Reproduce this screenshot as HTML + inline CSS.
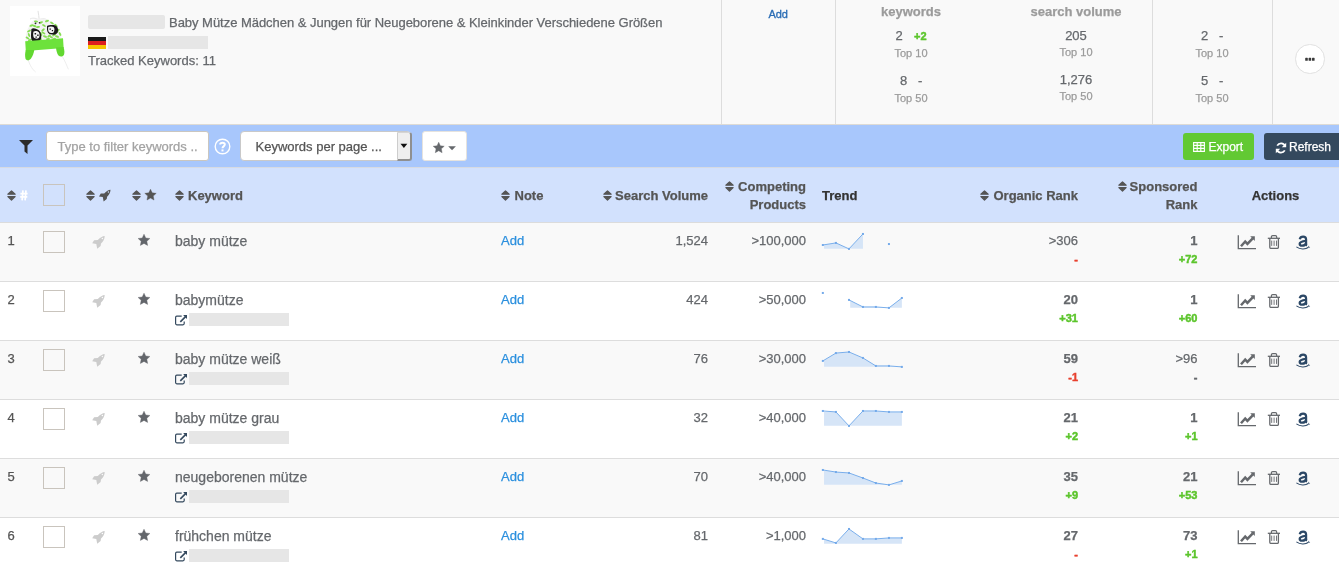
<!DOCTYPE html>
<html><head><meta charset="utf-8">
<style>
html,body{margin:0;padding:0;width:1339px;height:575px;overflow:hidden;background:#fff;}
body{position:relative;font-family:"Liberation Sans", sans-serif;}
.t{position:absolute;white-space:nowrap;-webkit-text-stroke:0.25px currentColor;}
.ch{-webkit-text-stroke:0.45px currentColor !important;}
#wrap{position:absolute;left:0;top:0;width:1339px;height:575px;will-change:transform;}
</style></head><body><div id="wrap">
<div style="position:absolute;left:0px;top:0px;width:1339px;height:124px;background:#f9f9f9"></div>
<div style="position:absolute;left:0px;top:124px;width:1339px;height:1px;background:#dedbd5"></div>
<div style="position:absolute;left:721px;top:0px;width:1px;height:124px;background:#dddddd"></div>
<div style="position:absolute;left:835px;top:0px;width:1px;height:124px;background:#dddddd"></div>
<div style="position:absolute;left:1152px;top:0px;width:1px;height:124px;background:#dddddd"></div>
<div style="position:absolute;left:1272px;top:0px;width:1px;height:124px;background:#dddddd"></div>
<svg style="position:absolute;left:10px;top:6px" width="70" height="70" viewBox="0 0 70 70">
<rect width="70" height="70" fill="#fff"/>
<path d="M28 4.9 C28.5 8 29 11 29.2 13.6" stroke="#e2e2e2" stroke-width="1" fill="none"/>
<path d="M20 13 C24 11 27 13 29 14 C32 12 35 12 37.5 14.5" stroke="#e6e6e6" stroke-width="1" fill="none"/>
<path d="M18.3 54 C20 60 23 64 25.6 66" stroke="#e8e8e8" stroke-width="0.8" fill="none"/>
<path d="M52.3 50.5 C55 55 57 60 58.4 63.3" stroke="#e8e8e8" stroke-width="0.8" fill="none"/>
<path d="M15.7 36.6 C15.5 30 16.5 25 18.3 22 C19.5 19 21 16.8 22.4 15.2 C25 13.5 27.5 12.6 29.7 12.6 C32 12.6 34.5 13 36.5 13.7 C40 15 43 16.8 45.4 18.9 C47.5 21.5 49 24.5 49.6 27.2 C50.5 29 51.2 30.5 51.6 31.9 Z" fill="#f3f3f3"/>
<ellipse cx="17.5" cy="32" rx="2.1" ry="1.0" transform="rotate(30 17.5 32)" fill="#86dd52"/><ellipse cx="19" cy="25" rx="2.1" ry="1.0" transform="rotate(-30 19 25)" fill="#86dd52"/><ellipse cx="21.5" cy="19.5" rx="2.1" ry="1.0" transform="rotate(-20 21.5 19.5)" fill="#86dd52"/><ellipse cx="26" cy="15.5" rx="2.1" ry="1.0" transform="rotate(10 26 15.5)" fill="#86dd52"/><ellipse cx="31" cy="16.5" rx="2.1" ry="1.0" transform="rotate(-25 31 16.5)" fill="#86dd52"/><ellipse cx="34" cy="19.5" rx="2.1" ry="1.0" transform="rotate(30 34 19.5)" fill="#86dd52"/><ellipse cx="33" cy="24" rx="2.1" ry="1.0" transform="rotate(-40 33 24)" fill="#86dd52"/><ellipse cx="35" cy="30.5" rx="2.1" ry="1.0" transform="rotate(20 35 30.5)" fill="#86dd52"/><ellipse cx="31" cy="28" rx="2.1" ry="1.0" transform="rotate(60 31 28)" fill="#86dd52"/><ellipse cx="38" cy="33" rx="2.1" ry="1.0" transform="rotate(-10 38 33)" fill="#86dd52"/><ellipse cx="41" cy="31" rx="2.1" ry="1.0" transform="rotate(30 41 31)" fill="#86dd52"/><ellipse cx="44" cy="29" rx="2.1" ry="1.0" transform="rotate(-30 44 29)" fill="#86dd52"/><ellipse cx="47" cy="30.5" rx="2.1" ry="1.0" transform="rotate(20 47 30.5)" fill="#86dd52"/><ellipse cx="48" cy="24.5" rx="2.1" ry="1.0" transform="rotate(-50 48 24.5)" fill="#86dd52"/><ellipse cx="42" cy="17" rx="2.1" ry="1.0" transform="rotate(30 42 17)" fill="#86dd52"/><ellipse cx="28" cy="21" rx="2.1" ry="1.0" transform="rotate(-10 28 21)" fill="#86dd52"/><ellipse cx="37" cy="15" rx="2.1" ry="1.0" transform="rotate(-20 37 15)" fill="#86dd52"/><ellipse cx="19" cy="29" rx="2.1" ry="1.0" transform="rotate(70 19 29)" fill="#86dd52"/><ellipse cx="23.5" cy="35" rx="2.1" ry="1.0" transform="rotate(0 23.5 35)" fill="#86dd52"/><ellipse cx="46" cy="19.5" rx="2.1" ry="1.0" transform="rotate(40 46 19.5)" fill="#86dd52"/><ellipse cx="30" cy="33.5" rx="2.1" ry="1.0" transform="rotate(-20 30 33.5)" fill="#86dd52"/>
<ellipse cx="20" cy="34" rx="2.1" ry="1.0" transform="rotate(-20 20 34)" fill="#86dd52"/><ellipse cx="27" cy="34.5" rx="2.1" ry="1.0" transform="rotate(10 27 34.5)" fill="#86dd52"/><ellipse cx="33" cy="35" rx="2.1" ry="1.0" transform="rotate(0 33 35)" fill="#86dd52"/><ellipse cx="44" cy="33" rx="2.1" ry="1.0" transform="rotate(-20 44 33)" fill="#86dd52"/><ellipse cx="50" cy="28" rx="2.1" ry="1.0" transform="rotate(60 50 28)" fill="#86dd52"/><ellipse cx="24.5" cy="20" rx="2.1" ry="1.0" transform="rotate(20 24.5 20)" fill="#86dd52"/><ellipse cx="39" cy="30" rx="2.1" ry="1.0" transform="rotate(-40 39 30)" fill="#86dd52"/><ellipse cx="46" cy="26" rx="2.1" ry="1.0" transform="rotate(10 46 26)" fill="#86dd52"/><ellipse cx="33.5" cy="27" rx="2.1" ry="1.0" transform="rotate(30 33.5 27)" fill="#86dd52"/>
<path d="M21.4 23 C22.5 22 24.5 22.2 25.8 22.8 L28.5 24 C30.5 25.5 31.5 28 31.3 31 C31 33.5 30 35.3 28 35.6 L23 35.4 C21.5 34.5 20.9 32 21 29 Z" fill="#1a1a1a"/>
<path d="M23.6 25.5 C25 24.6 27.5 24.8 28.8 26.2 C29.8 27.8 29.8 30 29 31.8 C27.8 33 25 33 23.8 31.6 C23 30 22.9 27.3 23.6 25.5 Z" fill="#f4f4f4"/>
<path d="M24.6 27 h1.5 v1.5 h-1.5 z M27.2 28.5 h1.4 v1.4 h-1.4 z M25.5 30.5 h1.3 v1.2 h-1.3 z" fill="#1a1a1a"/>
<path d="M37 20 C39 19 42.5 18.8 45.5 19.5 C47.5 20.5 48.3 22.5 48 25 C47.5 27.5 46 28.8 43.5 28.8 L39.5 28 C37.5 27 36.8 24.5 37 22 Z" fill="#1a1a1a"/>
<path d="M38.3 21 C39.8 20.3 42.5 20.3 43.8 21.2 C44.8 22.5 44.6 25 43.6 26.5 C42 27.3 39.8 27.2 38.8 26 C38 24.5 37.9 22.5 38.3 21 Z" fill="#f4f4f4"/>
<path d="M39.5 22.5 h1.4 v1.3 h-1.4 z M41.8 24 h1.3 v1.3 h-1.3 z" fill="#1a1a1a"/>
<circle cx="25.5" cy="17.3" r="0.9" fill="#2a2a2a"/><circle cx="29.5" cy="16.8" r="0.8" fill="#2a2a2a"/>
<path d="M15.2 35.3 L53 32.3 L53.6 42 L15.8 45 Z" fill="#6de23b"/>
<path d="M15.8 44 L24.3 44 C23.8 47 22.8 50 21 52.5 C19.5 54.5 17 55 15.6 53 C14.8 50 15 47 15.8 44 Z" fill="#62d830"/>
<path d="M46 41.5 L53.6 41 C54.5 44 54.6 47 54 48.8 C53 51 50 51 48.5 49.5 C47 47.5 46.3 45 46 41.5 Z" fill="#62d830"/>
</svg>
<div style="position:absolute;left:88px;top:15px;width:77px;height:14px;background:#e6e6e6;border-radius:2px"></div>
<div class="t " style="left:169px;top:16.00px;font-size:13px;line-height:13px;color:#65686c;font-weight:normal;letter-spacing:-0.03px;">Baby Mütze Mädchen &amp; Jungen für Neugeborene &amp; Kleinkinder Verschiedene Größen</div>
<div style="position:absolute;left:88px;top:37px;width:18px;height:4px;background:#1a1a1a"></div>
<div style="position:absolute;left:88px;top:41px;width:18px;height:4px;background:#dd1f1f"></div>
<div style="position:absolute;left:88px;top:45px;width:18px;height:4px;background:#f5c400"></div>
<div style="position:absolute;left:108px;top:36px;width:100px;height:13px;background:#e6e6e6"></div>
<div class="t " style="left:88px;top:53.50px;font-size:13px;line-height:13px;color:#65686c;font-weight:normal;">Tracked Keywords: 11</div>
<div class="t " style="left:478.20000000000005px;width:600px;text-align:center;top:8.89px;font-size:11px;line-height:11px;color:#2a6db5;font-weight:normal;-webkit-text-stroke:0.32px currentColor;">Add</div>
<div class="t " style="left:611px;width:600px;text-align:center;top:5.00px;font-size:13px;line-height:13px;color:#9b9b9b;font-weight:bold;">keywords</div>
<div class="t " style="left:776px;width:600px;text-align:center;top:5.00px;font-size:13px;line-height:13px;color:#9b9b9b;font-weight:bold;">search volume</div>
<div class="t " style="left:895.5px;top:29.00px;font-size:13px;line-height:13px;color:#65686c;font-weight:normal;">2</div>
<div class="t ch" style="left:914px;top:30.69px;font-size:11px;line-height:11px;color:#5cc52c;font-weight:bold;">+2</div>
<div class="t " style="left:611px;width:600px;text-align:center;top:47.69px;font-size:11px;line-height:11px;color:#9b9b9b;font-weight:normal;">Top 10</div>
<div class="t " style="left:900px;top:73.50px;font-size:13px;line-height:13px;color:#65686c;font-weight:normal;">8</div>
<div class="t " style="left:918px;top:73.50px;font-size:13px;line-height:13px;color:#65686c;font-weight:normal;">-</div>
<div class="t " style="left:611px;width:600px;text-align:center;top:92.69px;font-size:11px;line-height:11px;color:#9b9b9b;font-weight:normal;">Top 50</div>
<div class="t " style="left:776px;width:600px;text-align:center;top:29.00px;font-size:13px;line-height:13px;color:#65686c;font-weight:normal;">205</div>
<div class="t " style="left:776px;width:600px;text-align:center;top:46.69px;font-size:11px;line-height:11px;color:#9b9b9b;font-weight:normal;">Top 10</div>
<div class="t " style="left:776px;width:600px;text-align:center;top:72.50px;font-size:13px;line-height:13px;color:#65686c;font-weight:normal;">1,276</div>
<div class="t " style="left:776px;width:600px;text-align:center;top:90.69px;font-size:11px;line-height:11px;color:#9b9b9b;font-weight:normal;">Top 50</div>
<div class="t " style="left:1201px;top:29.00px;font-size:13px;line-height:13px;color:#65686c;font-weight:normal;">2</div>
<div class="t " style="left:1219px;top:29.00px;font-size:13px;line-height:13px;color:#65686c;font-weight:normal;">-</div>
<div class="t " style="left:912px;width:600px;text-align:center;top:47.69px;font-size:11px;line-height:11px;color:#9b9b9b;font-weight:normal;">Top 10</div>
<div class="t " style="left:1201px;top:74.00px;font-size:13px;line-height:13px;color:#65686c;font-weight:normal;">5</div>
<div class="t " style="left:1219px;top:74.00px;font-size:13px;line-height:13px;color:#65686c;font-weight:normal;">-</div>
<div class="t " style="left:912px;width:600px;text-align:center;top:92.69px;font-size:11px;line-height:11px;color:#9b9b9b;font-weight:normal;">Top 50</div>
<div style="position:absolute;left:1295.1px;top:44.2px;width:29.5px;height:29.5px;box-sizing:border-box;background:#fff;border:1px solid #e0e0e0;border-radius:50%"></div>
<svg style="position:absolute;left:1300px;top:50px" width="20" height="20"><rect x="5.2" y="7.8" width="2.6" height="3" rx="0.6" fill="#3a3a3a"/><rect x="8.6" y="7.8" width="2.6" height="3" rx="0.6" fill="#3a3a3a"/><rect x="12" y="7.8" width="2.6" height="3" rx="0.6" fill="#3a3a3a"/></svg>
<div style="position:absolute;left:0px;top:125px;width:1339px;height:42px;background:#a8c7fc"></div>
<div style="position:absolute;left:0px;top:167px;width:1339px;height:1px;background:#d6dae2"></div>
<svg style="position:absolute;left:19px;top:140px" width="14" height="14" viewBox="0 0 14 14"><path d="M0 0 H14 L8.5 5.5 V14 L5.5 11.5 V5.5 Z" fill="#2b2b2b"/></svg>
<div style="position:absolute;left:46px;top:131px;width:163px;height:30px;box-sizing:border-box;background:#fff;border:1px solid #cac6bf;border-radius:3px"></div>
<div class="t " style="left:57.5px;top:140.00px;font-size:13px;line-height:13px;color:#a3a3a3;font-weight:normal;">Type to filter keywords ..</div>
<svg style="position:absolute;left:214px;top:138px" width="17" height="17" viewBox="0 0 17 17"><circle cx="8.5" cy="8.5" r="7.3" stroke="#fff" stroke-width="1.4" fill="none"/><path d="M6.2 6.6 C6.2 4.2 10.8 4.2 10.8 6.6 C10.8 8.4 8.5 8.4 8.5 10.2" stroke="#fff" stroke-width="2" fill="none"/><rect x="7.5" y="11.4" width="2" height="2" fill="#fff"/></svg>
<div style="position:absolute;left:240px;top:131px;width:171px;height:30px;box-sizing:border-box;background:#fff;border:1px solid #c9c9c9;border-radius:4px"></div>
<div style="position:absolute;left:396.5px;top:132px;width:15px;height:29px;box-sizing:border-box;background:#efefef;border-left:1.5px solid #cdcdcd;border-top:1.5px solid #d5d5d5;border-bottom:2px solid #8f8f8f;border-right:2px solid #8f8f8f;border-radius:0 3px 3px 0"></div>
<svg style="position:absolute;left:399.7px;top:143px" width="9" height="6"><path d="M0.5 0.7 H7.3 L3.9 4.9 Z" fill="#111"/></svg>
<div class="t " style="left:255.5px;top:140.00px;font-size:13px;line-height:13px;color:#555555;font-weight:normal;">Keywords per page ...</div>
<div style="position:absolute;left:422px;top:131px;width:45px;height:30px;box-sizing:border-box;background:#fff;border:1px solid #e6e3de;border-radius:3px"></div>
<svg style="position:absolute;left:0;top:0;overflow:visible" width="1" height="1"><polygon points="438.70,142.20 440.34,145.75 444.22,146.21 441.35,148.86 442.11,152.69 438.70,150.78 435.29,152.69 436.05,148.86 433.18,146.21 437.06,145.75" fill="#65686c" stroke="#65686c" stroke-width="0.4" stroke-linejoin="round"/></svg>
<svg style="position:absolute;left:447.8px;top:145.6px" width="9" height="5"><path d="M0.2 0.3 H7.9 L4.05 4.3 Z" fill="#65686c"/></svg>
<div style="position:absolute;left:1183px;top:133px;width:71px;height:27px;background:#62c933;border-radius:3px"></div>
<svg style="position:absolute;left:1193px;top:142px" width="12" height="10" viewBox="0 0 12 10"><path d="M0.6 0.6 H11.4 V9.4 H0.6 Z M0.6 3.4 H11.4 M0.6 6.4 H11.4 M4.2 0.6 V9.4 M7.8 0.6 V9.4" stroke="#fff" stroke-width="1.1" fill="none"/></svg>
<div class="t " style="left:1208.5px;top:140.84px;font-size:12px;line-height:12px;color:#ffffff;font-weight:normal;">Export</div>
<div style="position:absolute;left:1264px;top:133px;width:80px;height:27px;background:#34495e;border-radius:3px"></div>
<svg style="position:absolute;left:1274.5px;top:142px" width="12" height="12" viewBox="0 0 12 12"><path d="M10.2 4.2 A4.5 4.5 0 0 0 2.2 3.6" stroke="#fff" stroke-width="1.8" fill="none"/><path d="M11.2 0.8 V5.2 H6.8 Z" fill="#fff"/><path d="M1.8 7.8 A4.5 4.5 0 0 0 9.8 8.4" stroke="#fff" stroke-width="1.8" fill="none"/><path d="M0.8 11.2 V6.8 H5.2 Z" fill="#fff"/></svg>
<div class="t " style="left:1289px;top:140.84px;font-size:12px;line-height:12px;color:#ffffff;font-weight:normal;">Refresh</div>
<div style="position:absolute;left:0px;top:168px;width:1339px;height:54px;background:#d2e1fd"></div>
<div style="position:absolute;left:0px;top:222px;width:1339px;height:1px;background:#dcdcdc"></div>
<svg style="position:absolute;left:7px;top:189.5px" width="9" height="11" viewBox="0 0 9 11"><path d="M4.5 0.9 L8.1 4.2 H0.9 Z" fill="#555" stroke="#555" stroke-width="1.3" stroke-linejoin="round"/><path d="M4.5 10.1 L8.1 6.6 H0.9 Z" fill="#555" stroke="#555" stroke-width="1.3" stroke-linejoin="round"/></svg>
<svg style="position:absolute;left:19.5px;top:189.8px" width="8" height="11" viewBox="0 0 8 11"><path d="M3 0.3 L2.1 10.3 M6 0.3 L5.1 10.3 M0.4 3.6 H7.6 M0.2 6.9 H7.3" stroke="#fff" stroke-width="1.7"/></svg>
<div style="position:absolute;left:43px;top:184px;width:22px;height:22px;box-sizing:border-box;border:1px solid #c9c4bd"></div>
<svg style="position:absolute;left:86px;top:189.5px" width="9" height="11" viewBox="0 0 9 11"><path d="M4.5 0.9 L8.1 4.2 H0.9 Z" fill="#555" stroke="#555" stroke-width="1.3" stroke-linejoin="round"/><path d="M4.5 10.1 L8.1 6.6 H0.9 Z" fill="#555" stroke="#555" stroke-width="1.3" stroke-linejoin="round"/></svg>
<svg style="position:absolute;left:97.0px;top:187.1px" width="16.560000000000002" height="16.560000000000002" viewBox="0 0 18 18"><path d="M14.7 3.0 C12.5 3.2 10.3 4.5 7.8 7.0 L4.1 7.2 L2.2 10.3 L6.3 11.0 L7.2 15.7 L10.6 13.1 L11.0 10.6 C13.2 8.5 14.6 6.0 14.7 3.0 Z" fill="#555"/><circle cx="12.4" cy="5.5" r="0.8" fill="#d2e1fd"/></svg>
<svg style="position:absolute;left:131.5px;top:189.5px" width="9" height="11" viewBox="0 0 9 11"><path d="M4.5 0.9 L8.1 4.2 H0.9 Z" fill="#555" stroke="#555" stroke-width="1.3" stroke-linejoin="round"/><path d="M4.5 10.1 L8.1 6.6 H0.9 Z" fill="#555" stroke="#555" stroke-width="1.3" stroke-linejoin="round"/></svg>
<svg style="position:absolute;left:0;top:0;overflow:visible" width="1" height="1"><polygon points="150.50,189.20 152.19,192.87 156.21,193.35 153.24,196.09 154.03,200.05 150.50,198.08 146.97,200.05 147.76,196.09 144.79,193.35 148.81,192.87" fill="#555" stroke="#555" stroke-width="0.4" stroke-linejoin="round"/></svg>
<svg style="position:absolute;left:175px;top:189.5px" width="9" height="11" viewBox="0 0 9 11"><path d="M4.5 0.9 L8.1 4.2 H0.9 Z" fill="#555" stroke="#555" stroke-width="1.3" stroke-linejoin="round"/><path d="M4.5 10.1 L8.1 6.6 H0.9 Z" fill="#555" stroke="#555" stroke-width="1.3" stroke-linejoin="round"/></svg>
<div class="t " style="left:188px;top:189.00px;font-size:13px;line-height:13px;color:#555555;font-weight:bold;">Keyword</div>
<svg style="position:absolute;left:501px;top:189.5px" width="9" height="11" viewBox="0 0 9 11"><path d="M4.5 0.9 L8.1 4.2 H0.9 Z" fill="#555" stroke="#555" stroke-width="1.3" stroke-linejoin="round"/><path d="M4.5 10.1 L8.1 6.6 H0.9 Z" fill="#555" stroke="#555" stroke-width="1.3" stroke-linejoin="round"/></svg>
<div class="t " style="left:514.5px;top:189.00px;font-size:13px;line-height:13px;color:#555555;font-weight:bold;">Note</div>
<svg style="position:absolute;left:603px;top:189.5px" width="9" height="11" viewBox="0 0 9 11"><path d="M4.5 0.9 L8.1 4.2 H0.9 Z" fill="#555" stroke="#555" stroke-width="1.3" stroke-linejoin="round"/><path d="M4.5 10.1 L8.1 6.6 H0.9 Z" fill="#555" stroke="#555" stroke-width="1.3" stroke-linejoin="round"/></svg>
<div class="t " style="right:631px;top:189.00px;font-size:13px;line-height:13px;color:#555555;font-weight:bold;">Search Volume</div>
<svg style="position:absolute;left:725px;top:181.0px" width="9" height="11" viewBox="0 0 9 11"><path d="M4.5 0.9 L8.1 4.2 H0.9 Z" fill="#555" stroke="#555" stroke-width="1.3" stroke-linejoin="round"/><path d="M4.5 10.1 L8.1 6.6 H0.9 Z" fill="#555" stroke="#555" stroke-width="1.3" stroke-linejoin="round"/></svg>
<div class="t " style="right:533px;top:180.00px;font-size:13px;line-height:13px;color:#555555;font-weight:bold;">Competing</div>
<div class="t " style="right:533px;top:197.50px;font-size:13px;line-height:13px;color:#555555;font-weight:bold;">Products</div>
<div class="t " style="left:822px;top:189.00px;font-size:13px;line-height:13px;color:#333333;font-weight:bold;">Trend</div>
<svg style="position:absolute;left:980px;top:189.5px" width="9" height="11" viewBox="0 0 9 11"><path d="M4.5 0.9 L8.1 4.2 H0.9 Z" fill="#555" stroke="#555" stroke-width="1.3" stroke-linejoin="round"/><path d="M4.5 10.1 L8.1 6.6 H0.9 Z" fill="#555" stroke="#555" stroke-width="1.3" stroke-linejoin="round"/></svg>
<div class="t " style="right:261px;top:189.00px;font-size:13px;line-height:13px;color:#555555;font-weight:bold;">Organic Rank</div>
<svg style="position:absolute;left:1117.5px;top:181.0px" width="9" height="11" viewBox="0 0 9 11"><path d="M4.5 0.9 L8.1 4.2 H0.9 Z" fill="#555" stroke="#555" stroke-width="1.3" stroke-linejoin="round"/><path d="M4.5 10.1 L8.1 6.6 H0.9 Z" fill="#555" stroke="#555" stroke-width="1.3" stroke-linejoin="round"/></svg>
<div class="t " style="right:141.5px;top:180.00px;font-size:13px;line-height:13px;color:#555555;font-weight:bold;">Sponsored</div>
<div class="t " style="right:141.5px;top:197.50px;font-size:13px;line-height:13px;color:#555555;font-weight:bold;">Rank</div>
<div class="t " style="left:975.5px;width:600px;text-align:center;top:189.00px;font-size:13px;line-height:13px;color:#333333;font-weight:bold;">Actions</div>
<div style="position:absolute;left:0px;top:223px;width:1339px;height:58px;background:#f9f9f9"></div>
<div style="position:absolute;left:0px;top:281px;width:1339px;height:1px;background:#dddddd"></div>
<div class="t " style="left:7.5px;top:234.00px;font-size:13px;line-height:13px;color:#555555;font-weight:normal;">1</div>
<div style="position:absolute;left:43px;top:231px;width:22px;height:22px;box-sizing:border-box;border:1px solid #c9c4bd"></div>
<svg style="position:absolute;left:90px;top:233px" width="18.0" height="18.0" viewBox="0 0 18 18"><path d="M14.7 3.0 C12.5 3.2 10.3 4.5 7.8 7.0 L4.1 7.2 L2.2 10.3 L6.3 11.0 L7.2 15.7 L10.6 13.1 L11.0 10.6 C13.2 8.5 14.6 6.0 14.7 3.0 Z" fill="#cccccc"/><circle cx="12.4" cy="5.5" r="0.8" fill="#f9f9f9"/></svg>
<svg style="position:absolute;left:0;top:0;overflow:visible" width="1" height="1"><polygon points="144.00,234.20 145.75,237.99 149.90,238.48 146.83,241.32 147.64,245.42 144.00,243.38 140.36,245.42 141.17,241.32 138.10,238.48 142.25,237.99" fill="#63666b" stroke="#63666b" stroke-width="0.4" stroke-linejoin="round"/></svg>
<div class="t " style="left:175px;top:233.95px;font-size:14px;line-height:14px;color:#65686c;font-weight:normal;">baby mütze</div>
<div class="t " style="left:501px;top:233.60px;font-size:13px;line-height:13px;color:#2c90de;font-weight:normal;">Add</div>
<div class="t " style="right:631px;top:234.00px;font-size:13px;line-height:13px;color:#65686c;font-weight:normal;">1,524</div>
<div class="t " style="right:533px;top:234.00px;font-size:13px;line-height:13px;color:#65686c;font-weight:normal;">&gt;100,000</div>
<svg style="position:absolute;left:0;top:0;overflow:visible" width="1" height="1"><path d="M822.84 245.01 L835.91 242.92 L848.98 248.90 L862.95 233.96 L862.95 248.75 L824.04 248.75 L824.04 245.01 Z" fill="#d6e5f7"/><path d="M822.84 245.01 L835.91 242.92 L848.98 248.90 L862.95 233.96" stroke="#79aeeb" stroke-width="1" fill="none"/><rect x="821.84" y="244.01" width="2" height="2" fill="#74aaea"/><rect x="834.91" y="241.92" width="2" height="2" fill="#74aaea"/><rect x="847.98" y="247.90" width="2" height="2" fill="#74aaea"/><rect x="861.95" y="232.96" width="2" height="2" fill="#74aaea"/><rect x="887.94" y="243.04" width="2" height="2" fill="#74aaea"/></svg>
<div class="t " style="right:261px;top:234.00px;font-size:13px;line-height:13px;color:#65686c;font-weight:normal;">&gt;306</div>
<div class="t ch" style="right:261px;top:253.69px;font-size:11px;line-height:11px;color:#e8412f;font-weight:bold;">-</div>
<div class="t " style="right:141.5px;top:234.00px;font-size:13px;line-height:13px;color:#65686c;font-weight:bold;">1</div>
<div class="t ch" style="right:141.5px;top:253.69px;font-size:11px;line-height:11px;color:#5cc52c;font-weight:bold;">+72</div>
<svg style="position:absolute;left:1237px;top:235px" width="20" height="15" viewBox="0 0 20 15"><path d="M1.3 0.3 V13.6 H19" stroke="#65686c" stroke-width="1.3" fill="none"/><path d="M4 11.3 L8.2 6.5 L10.4 8.9 L15.8 3.4" stroke="#65686c" stroke-width="2.5" fill="none"/><path d="M13.2 1.3 H17.8 V5.9 Z" fill="#65686c"/></svg>
<svg style="position:absolute;left:1267px;top:235px" width="14" height="14" viewBox="0 0 14 14"><path d="M0.8 3.3 H13" stroke="#65686c" stroke-width="1.3"/><path d="M4.4 3.3 V1.9 C4.4 1.1 4.9 0.7 5.7 0.7 H8.4 C9.2 0.7 9.7 1.1 9.7 1.9 V3.3" stroke="#65686c" stroke-width="1.2" fill="none"/><path d="M2.8 3.3 V12.2 C2.8 13 3.3 13.4 4.1 13.4 H10.1 C10.9 13.4 11.4 13 11.4 12.2 V3.3" stroke="#65686c" stroke-width="1.3" fill="none"/><path d="M4.7 5.6 V10.9 M7.1 5.6 V10.9 M9.5 5.6 V10.9" stroke="#65686c" stroke-width="0.9"/></svg>
<svg style="position:absolute;left:1290px;top:230px" width="25" height="25" viewBox="0 0 25 25"><path d="M9.7 9.2 C10.2 7.1 11.8 6.6 13.1 6.6 C15.1 6.6 16.1 7.6 16.1 9.6 V13.9 C16.1 14.8 16.5 15.2 17.1 15.4" stroke="#2c4866" stroke-width="2.2" fill="none"/><path d="M16.1 10.8 C12.6 11.2 9.7 11.6 9.7 13.7 C9.7 15.1 10.7 15.7 12.1 15.7 C13.9 15.7 15.5 14.7 16.1 13.2" stroke="#2c4866" stroke-width="2.3" fill="none"/><path d="M6.4 16.9 C10 19.6 15.5 19.6 18.6 17.3" stroke="#2c4866" stroke-width="1.1" fill="none"/><path d="M18.0 16.4 C18.9 16.3 19.7 16.9 19.4 17.9" stroke="#2c4866" stroke-width="0.7" fill="none"/></svg>
<div style="position:absolute;left:0px;top:282px;width:1339px;height:58px;background:#ffffff"></div>
<div style="position:absolute;left:0px;top:340px;width:1339px;height:1px;background:#dddddd"></div>
<div class="t " style="left:7.5px;top:293.00px;font-size:13px;line-height:13px;color:#555555;font-weight:normal;">2</div>
<div style="position:absolute;left:43px;top:290px;width:22px;height:22px;box-sizing:border-box;border:1px solid #c9c4bd"></div>
<svg style="position:absolute;left:90px;top:292px" width="18.0" height="18.0" viewBox="0 0 18 18"><path d="M14.7 3.0 C12.5 3.2 10.3 4.5 7.8 7.0 L4.1 7.2 L2.2 10.3 L6.3 11.0 L7.2 15.7 L10.6 13.1 L11.0 10.6 C13.2 8.5 14.6 6.0 14.7 3.0 Z" fill="#cccccc"/><circle cx="12.4" cy="5.5" r="0.8" fill="#ffffff"/></svg>
<svg style="position:absolute;left:0;top:0;overflow:visible" width="1" height="1"><polygon points="144.00,293.20 145.75,296.99 149.90,297.48 146.83,300.32 147.64,304.42 144.00,302.38 140.36,304.42 141.17,300.32 138.10,297.48 142.25,296.99" fill="#63666b" stroke="#63666b" stroke-width="0.4" stroke-linejoin="round"/></svg>
<div class="t " style="left:175px;top:292.95px;font-size:14px;line-height:14px;color:#65686c;font-weight:normal;">babymütze</div>
<svg style="position:absolute;left:175px;top:313.5px" width="13" height="13" viewBox="0 0 13 13"><path d="M6.7 2.2 H1.8 C1.1 2.2 0.6 2.7 0.6 3.4 V9.6 C0.6 10.3 1.1 10.8 1.8 10.8 H8 C8.7 10.8 9.2 10.3 9.2 9.6 V7.6" stroke="#34495e" stroke-width="1.2" fill="none"/><path d="M5.3 7.9 L10.6 2.6" stroke="#34495e" stroke-width="1.6"/><path d="M8.1 1.0 H12 V4.9 Z" fill="#34495e"/></svg>
<div style="position:absolute;left:189px;top:313px;width:100px;height:13px;background:#e6e6e6"></div>
<div class="t " style="left:501px;top:292.60px;font-size:13px;line-height:13px;color:#2c90de;font-weight:normal;">Add</div>
<div class="t " style="right:631px;top:293.00px;font-size:13px;line-height:13px;color:#65686c;font-weight:normal;">424</div>
<div class="t " style="right:533px;top:293.00px;font-size:13px;line-height:13px;color:#65686c;font-weight:normal;">&gt;50,000</div>
<svg style="position:absolute;left:0;top:0;overflow:visible" width="1" height="1"><rect x="821.84" y="291.96" width="2" height="2" fill="#74aaea"/><path d="M848.98 299.91 L862.95 306.93 L875.87 306.93 L888.94 307.90 L901.86 297.97 L901.86 307.75 L850.18 307.75 L850.18 299.91 Z" fill="#d6e5f7"/><path d="M848.98 299.91 L862.95 306.93 L875.87 306.93 L888.94 307.90 L901.86 297.97" stroke="#79aeeb" stroke-width="1" fill="none"/><rect x="847.98" y="298.91" width="2" height="2" fill="#74aaea"/><rect x="861.95" y="305.93" width="2" height="2" fill="#74aaea"/><rect x="874.87" y="305.93" width="2" height="2" fill="#74aaea"/><rect x="887.94" y="306.90" width="2" height="2" fill="#74aaea"/><rect x="900.86" y="296.97" width="2" height="2" fill="#74aaea"/></svg>
<div class="t " style="right:261px;top:293.00px;font-size:13px;line-height:13px;color:#65686c;font-weight:bold;">20</div>
<div class="t ch" style="right:261px;top:312.69px;font-size:11px;line-height:11px;color:#5cc52c;font-weight:bold;">+31</div>
<div class="t " style="right:141.5px;top:293.00px;font-size:13px;line-height:13px;color:#65686c;font-weight:bold;">1</div>
<div class="t ch" style="right:141.5px;top:312.69px;font-size:11px;line-height:11px;color:#5cc52c;font-weight:bold;">+60</div>
<svg style="position:absolute;left:1237px;top:294px" width="20" height="15" viewBox="0 0 20 15"><path d="M1.3 0.3 V13.6 H19" stroke="#65686c" stroke-width="1.3" fill="none"/><path d="M4 11.3 L8.2 6.5 L10.4 8.9 L15.8 3.4" stroke="#65686c" stroke-width="2.5" fill="none"/><path d="M13.2 1.3 H17.8 V5.9 Z" fill="#65686c"/></svg>
<svg style="position:absolute;left:1267px;top:294px" width="14" height="14" viewBox="0 0 14 14"><path d="M0.8 3.3 H13" stroke="#65686c" stroke-width="1.3"/><path d="M4.4 3.3 V1.9 C4.4 1.1 4.9 0.7 5.7 0.7 H8.4 C9.2 0.7 9.7 1.1 9.7 1.9 V3.3" stroke="#65686c" stroke-width="1.2" fill="none"/><path d="M2.8 3.3 V12.2 C2.8 13 3.3 13.4 4.1 13.4 H10.1 C10.9 13.4 11.4 13 11.4 12.2 V3.3" stroke="#65686c" stroke-width="1.3" fill="none"/><path d="M4.7 5.6 V10.9 M7.1 5.6 V10.9 M9.5 5.6 V10.9" stroke="#65686c" stroke-width="0.9"/></svg>
<svg style="position:absolute;left:1290px;top:289px" width="25" height="25" viewBox="0 0 25 25"><path d="M9.7 9.2 C10.2 7.1 11.8 6.6 13.1 6.6 C15.1 6.6 16.1 7.6 16.1 9.6 V13.9 C16.1 14.8 16.5 15.2 17.1 15.4" stroke="#2c4866" stroke-width="2.2" fill="none"/><path d="M16.1 10.8 C12.6 11.2 9.7 11.6 9.7 13.7 C9.7 15.1 10.7 15.7 12.1 15.7 C13.9 15.7 15.5 14.7 16.1 13.2" stroke="#2c4866" stroke-width="2.3" fill="none"/><path d="M6.4 16.9 C10 19.6 15.5 19.6 18.6 17.3" stroke="#2c4866" stroke-width="1.1" fill="none"/><path d="M18.0 16.4 C18.9 16.3 19.7 16.9 19.4 17.9" stroke="#2c4866" stroke-width="0.7" fill="none"/></svg>
<div style="position:absolute;left:0px;top:341px;width:1339px;height:58px;background:#f9f9f9"></div>
<div style="position:absolute;left:0px;top:399px;width:1339px;height:1px;background:#dddddd"></div>
<div class="t " style="left:7.5px;top:352.00px;font-size:13px;line-height:13px;color:#555555;font-weight:normal;">3</div>
<div style="position:absolute;left:43px;top:349px;width:22px;height:22px;box-sizing:border-box;border:1px solid #c9c4bd"></div>
<svg style="position:absolute;left:90px;top:351px" width="18.0" height="18.0" viewBox="0 0 18 18"><path d="M14.7 3.0 C12.5 3.2 10.3 4.5 7.8 7.0 L4.1 7.2 L2.2 10.3 L6.3 11.0 L7.2 15.7 L10.6 13.1 L11.0 10.6 C13.2 8.5 14.6 6.0 14.7 3.0 Z" fill="#cccccc"/><circle cx="12.4" cy="5.5" r="0.8" fill="#f9f9f9"/></svg>
<svg style="position:absolute;left:0;top:0;overflow:visible" width="1" height="1"><polygon points="144.00,352.20 145.75,355.99 149.90,356.48 146.83,359.32 147.64,363.42 144.00,361.38 140.36,363.42 141.17,359.32 138.10,356.48 142.25,355.99" fill="#63666b" stroke="#63666b" stroke-width="0.4" stroke-linejoin="round"/></svg>
<div class="t " style="left:175px;top:351.95px;font-size:14px;line-height:14px;color:#65686c;font-weight:normal;">baby mütze weiß</div>
<svg style="position:absolute;left:175px;top:372.5px" width="13" height="13" viewBox="0 0 13 13"><path d="M6.7 2.2 H1.8 C1.1 2.2 0.6 2.7 0.6 3.4 V9.6 C0.6 10.3 1.1 10.8 1.8 10.8 H8 C8.7 10.8 9.2 10.3 9.2 9.6 V7.6" stroke="#34495e" stroke-width="1.2" fill="none"/><path d="M5.3 7.9 L10.6 2.6" stroke="#34495e" stroke-width="1.6"/><path d="M8.1 1.0 H12 V4.9 Z" fill="#34495e"/></svg>
<div style="position:absolute;left:189px;top:372px;width:100px;height:13px;background:#e6e6e6"></div>
<div class="t " style="left:501px;top:351.60px;font-size:13px;line-height:13px;color:#2c90de;font-weight:normal;">Add</div>
<div class="t " style="right:631px;top:352.00px;font-size:13px;line-height:13px;color:#65686c;font-weight:normal;">76</div>
<div class="t " style="right:533px;top:352.00px;font-size:13px;line-height:13px;color:#65686c;font-weight:normal;">&gt;30,000</div>
<svg style="position:absolute;left:0;top:0;overflow:visible" width="1" height="1"><path d="M822.84 360.92 L835.91 353.08 L848.98 351.96 L862.95 357.94 L875.87 365.93 L888.94 365.93 L901.86 366.90 L901.86 366.75 L824.04 366.75 L824.04 360.92 Z" fill="#d6e5f7"/><path d="M822.84 360.92 L835.91 353.08 L848.98 351.96 L862.95 357.94 L875.87 365.93 L888.94 365.93 L901.86 366.90" stroke="#79aeeb" stroke-width="1" fill="none"/><rect x="821.84" y="359.92" width="2" height="2" fill="#74aaea"/><rect x="834.91" y="352.08" width="2" height="2" fill="#74aaea"/><rect x="847.98" y="350.96" width="2" height="2" fill="#74aaea"/><rect x="861.95" y="356.94" width="2" height="2" fill="#74aaea"/><rect x="874.87" y="364.93" width="2" height="2" fill="#74aaea"/><rect x="887.94" y="364.93" width="2" height="2" fill="#74aaea"/><rect x="900.86" y="365.90" width="2" height="2" fill="#74aaea"/></svg>
<div class="t " style="right:261px;top:352.00px;font-size:13px;line-height:13px;color:#65686c;font-weight:bold;">59</div>
<div class="t ch" style="right:261px;top:371.69px;font-size:11px;line-height:11px;color:#e8412f;font-weight:bold;">-1</div>
<div class="t " style="right:141.5px;top:352.00px;font-size:13px;line-height:13px;color:#65686c;font-weight:normal;">&gt;96</div>
<div class="t ch" style="right:141.5px;top:371.69px;font-size:11px;line-height:11px;color:#65686c;font-weight:bold;">-</div>
<svg style="position:absolute;left:1237px;top:353px" width="20" height="15" viewBox="0 0 20 15"><path d="M1.3 0.3 V13.6 H19" stroke="#65686c" stroke-width="1.3" fill="none"/><path d="M4 11.3 L8.2 6.5 L10.4 8.9 L15.8 3.4" stroke="#65686c" stroke-width="2.5" fill="none"/><path d="M13.2 1.3 H17.8 V5.9 Z" fill="#65686c"/></svg>
<svg style="position:absolute;left:1267px;top:353px" width="14" height="14" viewBox="0 0 14 14"><path d="M0.8 3.3 H13" stroke="#65686c" stroke-width="1.3"/><path d="M4.4 3.3 V1.9 C4.4 1.1 4.9 0.7 5.7 0.7 H8.4 C9.2 0.7 9.7 1.1 9.7 1.9 V3.3" stroke="#65686c" stroke-width="1.2" fill="none"/><path d="M2.8 3.3 V12.2 C2.8 13 3.3 13.4 4.1 13.4 H10.1 C10.9 13.4 11.4 13 11.4 12.2 V3.3" stroke="#65686c" stroke-width="1.3" fill="none"/><path d="M4.7 5.6 V10.9 M7.1 5.6 V10.9 M9.5 5.6 V10.9" stroke="#65686c" stroke-width="0.9"/></svg>
<svg style="position:absolute;left:1290px;top:348px" width="25" height="25" viewBox="0 0 25 25"><path d="M9.7 9.2 C10.2 7.1 11.8 6.6 13.1 6.6 C15.1 6.6 16.1 7.6 16.1 9.6 V13.9 C16.1 14.8 16.5 15.2 17.1 15.4" stroke="#2c4866" stroke-width="2.2" fill="none"/><path d="M16.1 10.8 C12.6 11.2 9.7 11.6 9.7 13.7 C9.7 15.1 10.7 15.7 12.1 15.7 C13.9 15.7 15.5 14.7 16.1 13.2" stroke="#2c4866" stroke-width="2.3" fill="none"/><path d="M6.4 16.9 C10 19.6 15.5 19.6 18.6 17.3" stroke="#2c4866" stroke-width="1.1" fill="none"/><path d="M18.0 16.4 C18.9 16.3 19.7 16.9 19.4 17.9" stroke="#2c4866" stroke-width="0.7" fill="none"/></svg>
<div style="position:absolute;left:0px;top:400px;width:1339px;height:58px;background:#ffffff"></div>
<div style="position:absolute;left:0px;top:458px;width:1339px;height:1px;background:#dddddd"></div>
<div class="t " style="left:7.5px;top:411.00px;font-size:13px;line-height:13px;color:#555555;font-weight:normal;">4</div>
<div style="position:absolute;left:43px;top:408px;width:22px;height:22px;box-sizing:border-box;border:1px solid #c9c4bd"></div>
<svg style="position:absolute;left:90px;top:410px" width="18.0" height="18.0" viewBox="0 0 18 18"><path d="M14.7 3.0 C12.5 3.2 10.3 4.5 7.8 7.0 L4.1 7.2 L2.2 10.3 L6.3 11.0 L7.2 15.7 L10.6 13.1 L11.0 10.6 C13.2 8.5 14.6 6.0 14.7 3.0 Z" fill="#cccccc"/><circle cx="12.4" cy="5.5" r="0.8" fill="#ffffff"/></svg>
<svg style="position:absolute;left:0;top:0;overflow:visible" width="1" height="1"><polygon points="144.00,411.20 145.75,414.99 149.90,415.48 146.83,418.32 147.64,422.42 144.00,420.38 140.36,422.42 141.17,418.32 138.10,415.48 142.25,414.99" fill="#63666b" stroke="#63666b" stroke-width="0.4" stroke-linejoin="round"/></svg>
<div class="t " style="left:175px;top:410.95px;font-size:14px;line-height:14px;color:#65686c;font-weight:normal;">baby mütze grau</div>
<svg style="position:absolute;left:175px;top:431.5px" width="13" height="13" viewBox="0 0 13 13"><path d="M6.7 2.2 H1.8 C1.1 2.2 0.6 2.7 0.6 3.4 V9.6 C0.6 10.3 1.1 10.8 1.8 10.8 H8 C8.7 10.8 9.2 10.3 9.2 9.6 V7.6" stroke="#34495e" stroke-width="1.2" fill="none"/><path d="M5.3 7.9 L10.6 2.6" stroke="#34495e" stroke-width="1.6"/><path d="M8.1 1.0 H12 V4.9 Z" fill="#34495e"/></svg>
<div style="position:absolute;left:189px;top:431px;width:100px;height:13px;background:#e6e6e6"></div>
<div class="t " style="left:501px;top:410.60px;font-size:13px;line-height:13px;color:#2c90de;font-weight:normal;">Add</div>
<div class="t " style="right:631px;top:411.00px;font-size:13px;line-height:13px;color:#65686c;font-weight:normal;">32</div>
<div class="t " style="right:533px;top:411.00px;font-size:13px;line-height:13px;color:#65686c;font-weight:normal;">&gt;40,000</div>
<svg style="position:absolute;left:0;top:0;overflow:visible" width="1" height="1"><path d="M822.84 410.96 L835.91 411.93 L848.98 425.90 L862.95 410.96 L875.87 410.96 L888.94 411.93 L901.86 411.93 L901.86 425.75 L824.04 425.75 L824.04 410.96 Z" fill="#d6e5f7"/><path d="M822.84 410.96 L835.91 411.93 L848.98 425.90 L862.95 410.96 L875.87 410.96 L888.94 411.93 L901.86 411.93" stroke="#79aeeb" stroke-width="1" fill="none"/><rect x="821.84" y="409.96" width="2" height="2" fill="#74aaea"/><rect x="834.91" y="410.93" width="2" height="2" fill="#74aaea"/><rect x="847.98" y="424.90" width="2" height="2" fill="#74aaea"/><rect x="861.95" y="409.96" width="2" height="2" fill="#74aaea"/><rect x="874.87" y="409.96" width="2" height="2" fill="#74aaea"/><rect x="887.94" y="410.93" width="2" height="2" fill="#74aaea"/><rect x="900.86" y="410.93" width="2" height="2" fill="#74aaea"/></svg>
<div class="t " style="right:261px;top:411.00px;font-size:13px;line-height:13px;color:#65686c;font-weight:bold;">21</div>
<div class="t ch" style="right:261px;top:430.69px;font-size:11px;line-height:11px;color:#5cc52c;font-weight:bold;">+2</div>
<div class="t " style="right:141.5px;top:411.00px;font-size:13px;line-height:13px;color:#65686c;font-weight:bold;">1</div>
<div class="t ch" style="right:141.5px;top:430.69px;font-size:11px;line-height:11px;color:#5cc52c;font-weight:bold;">+1</div>
<svg style="position:absolute;left:1237px;top:412px" width="20" height="15" viewBox="0 0 20 15"><path d="M1.3 0.3 V13.6 H19" stroke="#65686c" stroke-width="1.3" fill="none"/><path d="M4 11.3 L8.2 6.5 L10.4 8.9 L15.8 3.4" stroke="#65686c" stroke-width="2.5" fill="none"/><path d="M13.2 1.3 H17.8 V5.9 Z" fill="#65686c"/></svg>
<svg style="position:absolute;left:1267px;top:412px" width="14" height="14" viewBox="0 0 14 14"><path d="M0.8 3.3 H13" stroke="#65686c" stroke-width="1.3"/><path d="M4.4 3.3 V1.9 C4.4 1.1 4.9 0.7 5.7 0.7 H8.4 C9.2 0.7 9.7 1.1 9.7 1.9 V3.3" stroke="#65686c" stroke-width="1.2" fill="none"/><path d="M2.8 3.3 V12.2 C2.8 13 3.3 13.4 4.1 13.4 H10.1 C10.9 13.4 11.4 13 11.4 12.2 V3.3" stroke="#65686c" stroke-width="1.3" fill="none"/><path d="M4.7 5.6 V10.9 M7.1 5.6 V10.9 M9.5 5.6 V10.9" stroke="#65686c" stroke-width="0.9"/></svg>
<svg style="position:absolute;left:1290px;top:407px" width="25" height="25" viewBox="0 0 25 25"><path d="M9.7 9.2 C10.2 7.1 11.8 6.6 13.1 6.6 C15.1 6.6 16.1 7.6 16.1 9.6 V13.9 C16.1 14.8 16.5 15.2 17.1 15.4" stroke="#2c4866" stroke-width="2.2" fill="none"/><path d="M16.1 10.8 C12.6 11.2 9.7 11.6 9.7 13.7 C9.7 15.1 10.7 15.7 12.1 15.7 C13.9 15.7 15.5 14.7 16.1 13.2" stroke="#2c4866" stroke-width="2.3" fill="none"/><path d="M6.4 16.9 C10 19.6 15.5 19.6 18.6 17.3" stroke="#2c4866" stroke-width="1.1" fill="none"/><path d="M18.0 16.4 C18.9 16.3 19.7 16.9 19.4 17.9" stroke="#2c4866" stroke-width="0.7" fill="none"/></svg>
<div style="position:absolute;left:0px;top:459px;width:1339px;height:58px;background:#f9f9f9"></div>
<div style="position:absolute;left:0px;top:517px;width:1339px;height:1px;background:#dddddd"></div>
<div class="t " style="left:7.5px;top:470.00px;font-size:13px;line-height:13px;color:#555555;font-weight:normal;">5</div>
<div style="position:absolute;left:43px;top:467px;width:22px;height:22px;box-sizing:border-box;border:1px solid #c9c4bd"></div>
<svg style="position:absolute;left:90px;top:469px" width="18.0" height="18.0" viewBox="0 0 18 18"><path d="M14.7 3.0 C12.5 3.2 10.3 4.5 7.8 7.0 L4.1 7.2 L2.2 10.3 L6.3 11.0 L7.2 15.7 L10.6 13.1 L11.0 10.6 C13.2 8.5 14.6 6.0 14.7 3.0 Z" fill="#cccccc"/><circle cx="12.4" cy="5.5" r="0.8" fill="#f9f9f9"/></svg>
<svg style="position:absolute;left:0;top:0;overflow:visible" width="1" height="1"><polygon points="144.00,470.20 145.75,473.99 149.90,474.48 146.83,477.32 147.64,481.42 144.00,479.38 140.36,481.42 141.17,477.32 138.10,474.48 142.25,473.99" fill="#63666b" stroke="#63666b" stroke-width="0.4" stroke-linejoin="round"/></svg>
<div class="t " style="left:175px;top:469.95px;font-size:14px;line-height:14px;color:#65686c;font-weight:normal;">neugeborenen mütze</div>
<svg style="position:absolute;left:175px;top:490.5px" width="13" height="13" viewBox="0 0 13 13"><path d="M6.7 2.2 H1.8 C1.1 2.2 0.6 2.7 0.6 3.4 V9.6 C0.6 10.3 1.1 10.8 1.8 10.8 H8 C8.7 10.8 9.2 10.3 9.2 9.6 V7.6" stroke="#34495e" stroke-width="1.2" fill="none"/><path d="M5.3 7.9 L10.6 2.6" stroke="#34495e" stroke-width="1.6"/><path d="M8.1 1.0 H12 V4.9 Z" fill="#34495e"/></svg>
<div style="position:absolute;left:189px;top:490px;width:100px;height:13px;background:#e6e6e6"></div>
<div class="t " style="left:501px;top:469.60px;font-size:13px;line-height:13px;color:#2c90de;font-weight:normal;">Add</div>
<div class="t " style="right:631px;top:470.00px;font-size:13px;line-height:13px;color:#65686c;font-weight:normal;">70</div>
<div class="t " style="right:533px;top:470.00px;font-size:13px;line-height:13px;color:#65686c;font-weight:normal;">&gt;40,000</div>
<svg style="position:absolute;left:0;top:0;overflow:visible" width="1" height="1"><path d="M822.84 469.96 L835.91 472.05 L848.98 472.95 L862.95 478.03 L875.87 483.03 L888.94 484.90 L901.86 480.94 L901.86 484.75 L824.04 484.75 L824.04 469.96 Z" fill="#d6e5f7"/><path d="M822.84 469.96 L835.91 472.05 L848.98 472.95 L862.95 478.03 L875.87 483.03 L888.94 484.90 L901.86 480.94" stroke="#79aeeb" stroke-width="1" fill="none"/><rect x="821.84" y="468.96" width="2" height="2" fill="#74aaea"/><rect x="834.91" y="471.05" width="2" height="2" fill="#74aaea"/><rect x="847.98" y="471.95" width="2" height="2" fill="#74aaea"/><rect x="861.95" y="477.03" width="2" height="2" fill="#74aaea"/><rect x="874.87" y="482.03" width="2" height="2" fill="#74aaea"/><rect x="887.94" y="483.90" width="2" height="2" fill="#74aaea"/><rect x="900.86" y="479.94" width="2" height="2" fill="#74aaea"/></svg>
<div class="t " style="right:261px;top:470.00px;font-size:13px;line-height:13px;color:#65686c;font-weight:bold;">35</div>
<div class="t ch" style="right:261px;top:489.69px;font-size:11px;line-height:11px;color:#5cc52c;font-weight:bold;">+9</div>
<div class="t " style="right:141.5px;top:470.00px;font-size:13px;line-height:13px;color:#65686c;font-weight:bold;">21</div>
<div class="t ch" style="right:141.5px;top:489.69px;font-size:11px;line-height:11px;color:#5cc52c;font-weight:bold;">+53</div>
<svg style="position:absolute;left:1237px;top:471px" width="20" height="15" viewBox="0 0 20 15"><path d="M1.3 0.3 V13.6 H19" stroke="#65686c" stroke-width="1.3" fill="none"/><path d="M4 11.3 L8.2 6.5 L10.4 8.9 L15.8 3.4" stroke="#65686c" stroke-width="2.5" fill="none"/><path d="M13.2 1.3 H17.8 V5.9 Z" fill="#65686c"/></svg>
<svg style="position:absolute;left:1267px;top:471px" width="14" height="14" viewBox="0 0 14 14"><path d="M0.8 3.3 H13" stroke="#65686c" stroke-width="1.3"/><path d="M4.4 3.3 V1.9 C4.4 1.1 4.9 0.7 5.7 0.7 H8.4 C9.2 0.7 9.7 1.1 9.7 1.9 V3.3" stroke="#65686c" stroke-width="1.2" fill="none"/><path d="M2.8 3.3 V12.2 C2.8 13 3.3 13.4 4.1 13.4 H10.1 C10.9 13.4 11.4 13 11.4 12.2 V3.3" stroke="#65686c" stroke-width="1.3" fill="none"/><path d="M4.7 5.6 V10.9 M7.1 5.6 V10.9 M9.5 5.6 V10.9" stroke="#65686c" stroke-width="0.9"/></svg>
<svg style="position:absolute;left:1290px;top:466px" width="25" height="25" viewBox="0 0 25 25"><path d="M9.7 9.2 C10.2 7.1 11.8 6.6 13.1 6.6 C15.1 6.6 16.1 7.6 16.1 9.6 V13.9 C16.1 14.8 16.5 15.2 17.1 15.4" stroke="#2c4866" stroke-width="2.2" fill="none"/><path d="M16.1 10.8 C12.6 11.2 9.7 11.6 9.7 13.7 C9.7 15.1 10.7 15.7 12.1 15.7 C13.9 15.7 15.5 14.7 16.1 13.2" stroke="#2c4866" stroke-width="2.3" fill="none"/><path d="M6.4 16.9 C10 19.6 15.5 19.6 18.6 17.3" stroke="#2c4866" stroke-width="1.1" fill="none"/><path d="M18.0 16.4 C18.9 16.3 19.7 16.9 19.4 17.9" stroke="#2c4866" stroke-width="0.7" fill="none"/></svg>
<div style="position:absolute;left:0px;top:518px;width:1339px;height:58px;background:#ffffff"></div>
<div style="position:absolute;left:0px;top:576px;width:1339px;height:1px;background:#dddddd"></div>
<div class="t " style="left:7.5px;top:529.00px;font-size:13px;line-height:13px;color:#555555;font-weight:normal;">6</div>
<div style="position:absolute;left:43px;top:526px;width:22px;height:22px;box-sizing:border-box;border:1px solid #c9c4bd"></div>
<svg style="position:absolute;left:90px;top:528px" width="18.0" height="18.0" viewBox="0 0 18 18"><path d="M14.7 3.0 C12.5 3.2 10.3 4.5 7.8 7.0 L4.1 7.2 L2.2 10.3 L6.3 11.0 L7.2 15.7 L10.6 13.1 L11.0 10.6 C13.2 8.5 14.6 6.0 14.7 3.0 Z" fill="#cccccc"/><circle cx="12.4" cy="5.5" r="0.8" fill="#ffffff"/></svg>
<svg style="position:absolute;left:0;top:0;overflow:visible" width="1" height="1"><polygon points="144.00,529.20 145.75,532.99 149.90,533.48 146.83,536.32 147.64,540.42 144.00,538.38 140.36,540.42 141.17,536.32 138.10,533.48 142.25,532.99" fill="#63666b" stroke="#63666b" stroke-width="0.4" stroke-linejoin="round"/></svg>
<div class="t " style="left:175px;top:528.95px;font-size:14px;line-height:14px;color:#65686c;font-weight:normal;">frühchen mütze</div>
<svg style="position:absolute;left:175px;top:549.5px" width="13" height="13" viewBox="0 0 13 13"><path d="M6.7 2.2 H1.8 C1.1 2.2 0.6 2.7 0.6 3.4 V9.6 C0.6 10.3 1.1 10.8 1.8 10.8 H8 C8.7 10.8 9.2 10.3 9.2 9.6 V7.6" stroke="#34495e" stroke-width="1.2" fill="none"/><path d="M5.3 7.9 L10.6 2.6" stroke="#34495e" stroke-width="1.6"/><path d="M8.1 1.0 H12 V4.9 Z" fill="#34495e"/></svg>
<div style="position:absolute;left:189px;top:549px;width:100px;height:13px;background:#e6e6e6"></div>
<div class="t " style="left:501px;top:528.60px;font-size:13px;line-height:13px;color:#2c90de;font-weight:normal;">Add</div>
<div class="t " style="right:631px;top:529.00px;font-size:13px;line-height:13px;color:#65686c;font-weight:normal;">81</div>
<div class="t " style="right:533px;top:529.00px;font-size:13px;line-height:13px;color:#65686c;font-weight:normal;">&gt;1,000</div>
<svg style="position:absolute;left:0;top:0;overflow:visible" width="1" height="1"><path d="M822.84 538.89 L835.91 542.93 L848.98 528.96 L862.95 538.89 L875.87 538.89 L888.94 537.92 L901.86 537.92 L901.86 543.75 L824.04 543.75 L824.04 538.89 Z" fill="#d6e5f7"/><path d="M822.84 538.89 L835.91 542.93 L848.98 528.96 L862.95 538.89 L875.87 538.89 L888.94 537.92 L901.86 537.92" stroke="#79aeeb" stroke-width="1" fill="none"/><rect x="821.84" y="537.89" width="2" height="2" fill="#74aaea"/><rect x="834.91" y="541.93" width="2" height="2" fill="#74aaea"/><rect x="847.98" y="527.96" width="2" height="2" fill="#74aaea"/><rect x="861.95" y="537.89" width="2" height="2" fill="#74aaea"/><rect x="874.87" y="537.89" width="2" height="2" fill="#74aaea"/><rect x="887.94" y="536.92" width="2" height="2" fill="#74aaea"/><rect x="900.86" y="536.92" width="2" height="2" fill="#74aaea"/></svg>
<div class="t " style="right:261px;top:529.00px;font-size:13px;line-height:13px;color:#65686c;font-weight:bold;">27</div>
<div class="t ch" style="right:261px;top:548.69px;font-size:11px;line-height:11px;color:#e8412f;font-weight:bold;">-</div>
<div class="t " style="right:141.5px;top:529.00px;font-size:13px;line-height:13px;color:#65686c;font-weight:bold;">73</div>
<div class="t ch" style="right:141.5px;top:548.69px;font-size:11px;line-height:11px;color:#5cc52c;font-weight:bold;">+1</div>
<svg style="position:absolute;left:1237px;top:530px" width="20" height="15" viewBox="0 0 20 15"><path d="M1.3 0.3 V13.6 H19" stroke="#65686c" stroke-width="1.3" fill="none"/><path d="M4 11.3 L8.2 6.5 L10.4 8.9 L15.8 3.4" stroke="#65686c" stroke-width="2.5" fill="none"/><path d="M13.2 1.3 H17.8 V5.9 Z" fill="#65686c"/></svg>
<svg style="position:absolute;left:1267px;top:530px" width="14" height="14" viewBox="0 0 14 14"><path d="M0.8 3.3 H13" stroke="#65686c" stroke-width="1.3"/><path d="M4.4 3.3 V1.9 C4.4 1.1 4.9 0.7 5.7 0.7 H8.4 C9.2 0.7 9.7 1.1 9.7 1.9 V3.3" stroke="#65686c" stroke-width="1.2" fill="none"/><path d="M2.8 3.3 V12.2 C2.8 13 3.3 13.4 4.1 13.4 H10.1 C10.9 13.4 11.4 13 11.4 12.2 V3.3" stroke="#65686c" stroke-width="1.3" fill="none"/><path d="M4.7 5.6 V10.9 M7.1 5.6 V10.9 M9.5 5.6 V10.9" stroke="#65686c" stroke-width="0.9"/></svg>
<svg style="position:absolute;left:1290px;top:525px" width="25" height="25" viewBox="0 0 25 25"><path d="M9.7 9.2 C10.2 7.1 11.8 6.6 13.1 6.6 C15.1 6.6 16.1 7.6 16.1 9.6 V13.9 C16.1 14.8 16.5 15.2 17.1 15.4" stroke="#2c4866" stroke-width="2.2" fill="none"/><path d="M16.1 10.8 C12.6 11.2 9.7 11.6 9.7 13.7 C9.7 15.1 10.7 15.7 12.1 15.7 C13.9 15.7 15.5 14.7 16.1 13.2" stroke="#2c4866" stroke-width="2.3" fill="none"/><path d="M6.4 16.9 C10 19.6 15.5 19.6 18.6 17.3" stroke="#2c4866" stroke-width="1.1" fill="none"/><path d="M18.0 16.4 C18.9 16.3 19.7 16.9 19.4 17.9" stroke="#2c4866" stroke-width="0.7" fill="none"/></svg>
</div></body></html>
